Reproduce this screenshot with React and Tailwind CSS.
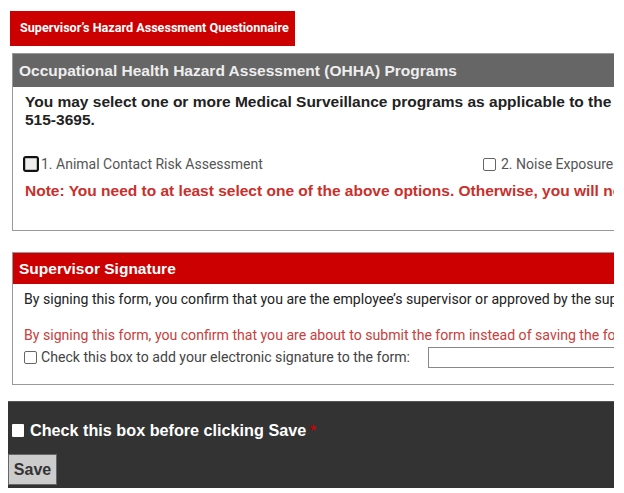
import React from 'react';

const arial = { fontFamily: '"Liberation Sans", Arial, sans-serif' };
const narrow = { fontFamily: 'Roboto, "Liberation Sans", Arial, sans-serif' };

export default function App() {
  return (
    <div className="w-[614px] overflow-hidden bg-white pt-[11px]" style={arial}>
      {/* top tab */}
      <div className="ml-[10px] w-[285px] h-[35px] bg-[#cc0000] flex items-center pl-[10px]">
        <span className="text-white font-bold text-[12.6px] whitespace-nowrap" style={narrow}>
          Supervisor’s Hazard Assessment Questionnaire
        </span>
      </div>

      {/* OHHA panel */}
      <div className="ml-[12px] mt-[7px] w-[640px] border border-[#999] h-[178px]">
        <div className="h-[33px] bg-[#666] flex items-center pl-[6px]">
          <span className="text-[#eeeeee] font-bold text-[15.5px] whitespace-nowrap">
            Occupational Health Hazard Assessment (OHHA) Programs
          </span>
        </div>
        <div className="pl-[12px] pt-[6px]">
          <p className="text-[15.5px] font-bold text-[#222] leading-[18px] whitespace-nowrap">
            You may select one or more Medical Surveillance programs as applicable to the employee. For questions call
            <br />
            515-3695.
          </p>
          <div className="mt-[26px] flex items-center h-[18px] whitespace-nowrap">
            <div className="flex items-center w-[448px]">
              <span className="w-[16px] h-[16px] -ml-[2px] rounded-[3px] border-2 border-[#111] bg-[#eee] shadow-[inset_0_0_0_1px_#bbb]" />
              <span className="ml-[2px] text-[14px] text-[#555]" style={narrow}>1. Animal Contact Risk Assessment</span>
            </div>
            <div className="flex items-center ml-[10px]">
              <span className="w-[13px] h-[13px] rounded-[2px] border border-[#666] bg-white" />
              <span className="ml-[5px] text-[14px] text-[#555]" style={narrow}>2. Noise Exposure</span>
            </div>
          </div>
          <p className="mt-[6px] text-[15.5px] font-bold text-[#c9302c] whitespace-nowrap">
            Note: You need to at least select one of the above options. Otherwise, you will not be able to submit the form.
          </p>
        </div>
      </div>

      {/* Signature panel */}
      <div className="ml-[12px] mt-[21px] w-[640px] border border-[#999] h-[133px]">
        <div className="h-[31px] bg-[#cc0000] flex items-center pl-[6px]">
          <span className="text-white font-bold text-[15.5px]">Supervisor Signature</span>
        </div>
        <div className="pl-[11px] pt-[6px] text-[14.1px] whitespace-nowrap" style={narrow}>
          <p className="text-[#222] leading-[18px]">
            By signing this form, you confirm that you are the employee’s supervisor or approved by the supervisor to complete this form.
          </p>
          <p className="mt-[18px] text-[#c9403c] leading-[18px]">
            By signing this form, you confirm that you are about to submit the form instead of saving the form.
          </p>
          <div className="mt-[3px] flex items-center">
            <span className="w-[13px] h-[13px] rounded-[2px] border border-[#666] bg-white" />
            <span className="ml-[4px] text-[#444]">Check this box to add your electronic signature to the form:</span>
            <span className="ml-[18px] w-[200px] h-[21px] border border-[#888] bg-white" />
          </div>
        </div>
      </div>

      {/* Save bar */}
      <div className="ml-[8px] mt-[16px] w-[606px] h-[87px] bg-[#333] border-t border-[#555] pt-[16px] pl-[4px]">
        <div className="flex items-center">
          <span className="w-[12px] h-[13px] bg-white rounded-[1px]" />
          <span className="ml-[6px] text-white font-bold text-[16.2px]">Check this box before clicking Save</span>
          <span className="ml-[4px] text-[#cc0000] font-bold text-[14px]">*</span>
        </div>
        <button className="-ml-[4px] mt-[12px] w-[49px] h-[31px] bg-[#cccccc] border border-[#666] text-[16px] font-bold text-[#333]">
          Save
        </button>
      </div>
    </div>
  );
}
